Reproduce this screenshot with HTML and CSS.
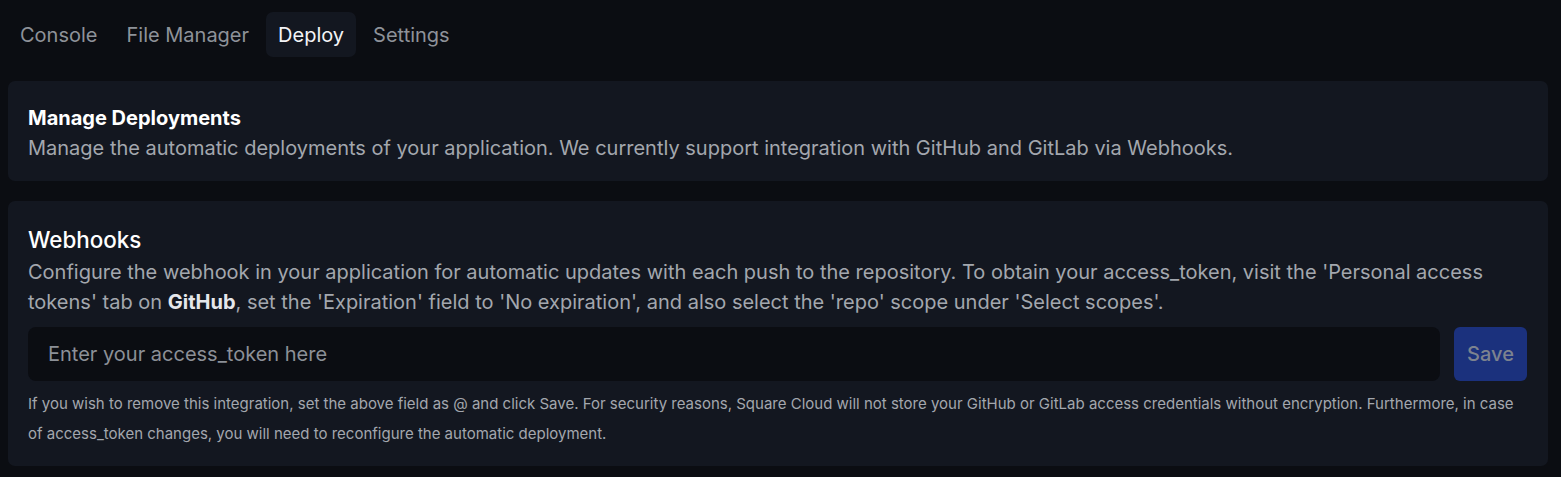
FILE: index.html
```html
<!DOCTYPE html>
<html lang="en">
<head>
<meta charset="utf-8">
<title>Deploy</title>
<link rel="stylesheet" href="styles.css">
</head>
<body>
<div class="page">
  <nav class="tabs">
    <a class="tab">Console</a>
    <a class="tab">File Manager</a>
    <a class="tab active">Deploy</a>
    <a class="tab">Settings</a>
  </nav>
  <section class="card intro">
    <h2 class="card-title">Manage Deployments</h2>
    <p class="card-text">Manage the automatic deployments of your application. We currently support integration with GitHub and GitLab via Webhooks.</p>
  </section>
  <section class="card webhooks">
    <h3 class="section-title">Webhooks</h3>
    <p class="card-text">Configure the webhook in your application for automatic updates with each push to the repository. To obtain your access_token, visit the 'Personal access tokens' tab on <strong>GitHub</strong>, set the 'Expiration' field to 'No expiration', and also select the 'repo' scope under 'Select scopes'.</p>
    <form class="token-form">
      <input class="token-input" type="text" placeholder="Enter your access_token here">
      <button class="save-btn" type="button">Save</button>
    </form>
    <p class="note">If you wish to remove this integration, set the above field as @ and click Save. For security reasons, Square Cloud will not store your GitHub or GitLab access credentials without encryption. Furthermore, in case of access_token changes, you will need to reconfigure the automatic deployment.</p>
  </section>
</div>
</body>
</html>
```

FILE: styles.css
```css
* { box-sizing: border-box; }
html, body { margin: 0; padding: 0; background: #0b0d12; }
body {
  font-family: Inter, "Noto Sans", sans-serif;
  color: #a3a7ae;
}
.page {
  padding: 12px 13px 0 8px;
  display: flex;
  flex-direction: column;
}
.tabs {
  display: flex;
  gap: 5px;
  height: 45px;
  align-items: stretch;
}
.tab {
  display: flex;
  align-items: center;
  padding: 0 12px;
  font-size: 20px;
  color: #8e9299;
  border-radius: 7px;
  cursor: pointer;
}
.tab.active {
  background: #131720;
  color: #f3f4f6;
}
.card {
  background: #131720;
  border-radius: 7px;
  padding: 22px 20px 18px;
}
.intro { margin-top: 24px; }
.webhooks { margin-top: 20px; padding: 23px 21px 17px 20px; }
.card-title {
  margin: 0;
  font-size: 20px;
  font-weight: 700;
  line-height: 30px;
  color: #ffffff;
}
.card-text {
  margin: 0;
  font-size: 20px;
  line-height: 30px;
  color: #a3a7ae;
}
.card-text strong { color: #e5e7eb; font-weight: 700; }
.section-title {
  margin: 0;
  font-size: 22.4px;
  font-weight: 500;
  line-height: 32px;
  color: #ffffff;
}
.webhooks .card-text { margin-top: 1px; }
.token-form {
  display: flex;
  gap: 14px;
  margin-top: 10px;
}
.token-input {
  flex: 1;
  height: 54px;
  border: none;
  outline: none;
  border-radius: 8px;
  background: #0b0d12;
  padding: 0 20px;
  font-family: Inter, sans-serif;
  font-size: 20px;
  color: #e5e7eb;
}
.token-input::placeholder { color: #8c9097; }
.save-btn {
  width: 73px;
  height: 54px;
  border: none;
  border-radius: 6px;
  background: #1b317d;
  color: #7d838f;
  font-family: Inter, sans-serif;
  font-size: 20px;
  font-weight: 500;
}
.note {
  margin: 8px 0 0;
  font-family: Inter, sans-serif;
  font-size: 15px;
  line-height: 30px;
  color: #a3a7ae;
}
```
